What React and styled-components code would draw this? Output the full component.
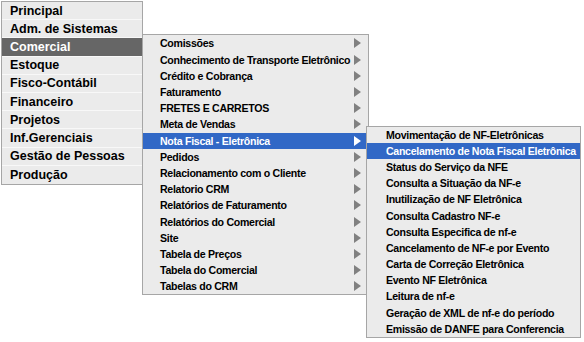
import React from "react";
import styled, { createGlobalStyle } from "styled-components";

const GlobalStyle = createGlobalStyle`
  body {
    margin: 0;
    background: #fff;
    font-family: "Liberation Sans", Arial, sans-serif;
  }
`;

const Page = styled.div`
  min-height: 342px;
  padding: 1px 0 0 1px;
  box-sizing: border-box;
`;

const MainList = styled.ul`
  list-style: none;
  margin: 0;
  padding: 0;
  width: 140px;
  border: 1px solid #a6a6a6;
  background: #ebebeb;
`;

const MainItem = styled.li`
  position: relative;
  height: 18.2px;
  box-sizing: border-box;
  border-bottom: 1px solid #f8f8f8;
  padding-left: 8px;
  display: flex;
  align-items: center;
  font-size: 12.5px;
  font-weight: bold;
  white-space: nowrap;
  color: ${(p) => (p.active ? "#fff" : "#000")};
  background: ${(p) => (p.active ? "#666666" : "transparent")};
  &:last-child {
    border-bottom: none;
  }
`;

const SubList = styled.ul`
  position: absolute;
  left: ${(p) => p.left}px;
  top: ${(p) => p.top}px;
  width: ${(p) => p.width}px;
  list-style: none;
  margin: 0;
  padding: 0;
  border: 1px solid #a6a6a6;
  background: #ebebeb;
  z-index: 2;
`;

const SubItem = styled.li`
  position: relative;
  height: 16.2px;
  display: flex;
  align-items: center;
  justify-content: space-between;
  padding-left: ${(p) => p.pad}px;
  padding-right: 7px;
  font-size: 10.6px;
  font-weight: bold;
  letter-spacing: -0.3px;
  white-space: nowrap;
  color: ${(p) => (p.active ? "#fff" : "#000")};
  background: ${(p) => (p.active ? "#3168c6" : "transparent")};
`;

const Arrow = styled.span`
  flex: none;
  width: 0;
  height: 0;
  border-top: 5px solid transparent;
  border-bottom: 5px solid transparent;
  border-left: 7px solid ${(p) => (p.active ? "#fff" : "#808080")};
`;

const mainItems = [
  "Principal",
  "Adm. de Sistemas",
  "Comercial",
  "Estoque",
  "Fisco-Contábil",
  "Financeiro",
  "Projetos",
  "Inf.Gerenciais",
  "Gestão de Pessoas",
  "Produção",
];

const comercialItems = [
  "Comissões",
  "Conhecimento de Transporte Eletrônico",
  "Crédito e Cobrança",
  "Faturamento",
  "FRETES E CARRETOS",
  "Meta de Vendas",
  "Nota Fiscal - Eletrônica",
  "Pedidos",
  "Relacionamento com o Cliente",
  "Relatorio CRM",
  "Relatórios de Faturamento",
  "Relatórios do Comercial",
  "Site",
  "Tabela de Preços",
  "Tabela do Comercial",
  "Tabelas do CRM",
];

const nfeItems = [
  "Movimentação de NF-Eletrônicas",
  "Cancelamento de Nota Fiscal Eletrônica",
  "Status do Serviço da NFE",
  "Consulta a Situação da NF-e",
  "Inutilização de NF Eletrônica",
  "Consulta Cadastro NF-e",
  "Consulta Especifica de nf-e",
  "Cancelamento de NF-e por Evento",
  "Carta de Correção Eletrônica",
  "Evento NF Eletrônica",
  "Leitura de nf-e",
  "Geração de XML de nf-e do período",
  "Emissão de DANFE para Conferencia",
];

function NfeMenu() {
  return (
    <SubList left={223} top={-7} width={213}>
      {nfeItems.map((label, i) => (
        <SubItem key={label} pad={19} active={i === 1}>
          {label}
        </SubItem>
      ))}
    </SubList>
  );
}

function ComercialMenu() {
  return (
    <SubList left={140} top={-4} width={225}>
      {comercialItems.map((label, i) => (
        <SubItem key={label} pad={17} active={i === 6}>
          {label}
          <Arrow active={i === 6} />
          {i === 6 && <NfeMenu />}
        </SubItem>
      ))}
    </SubList>
  );
}

export default function App() {
  return (
    <Page>
      <GlobalStyle />
      <MainList>
        {mainItems.map((label, i) => (
          <MainItem key={label} active={i === 2}>
            {label}
            {i === 2 && <ComercialMenu />}
          </MainItem>
        ))}
      </MainList>
    </Page>
  );
}
